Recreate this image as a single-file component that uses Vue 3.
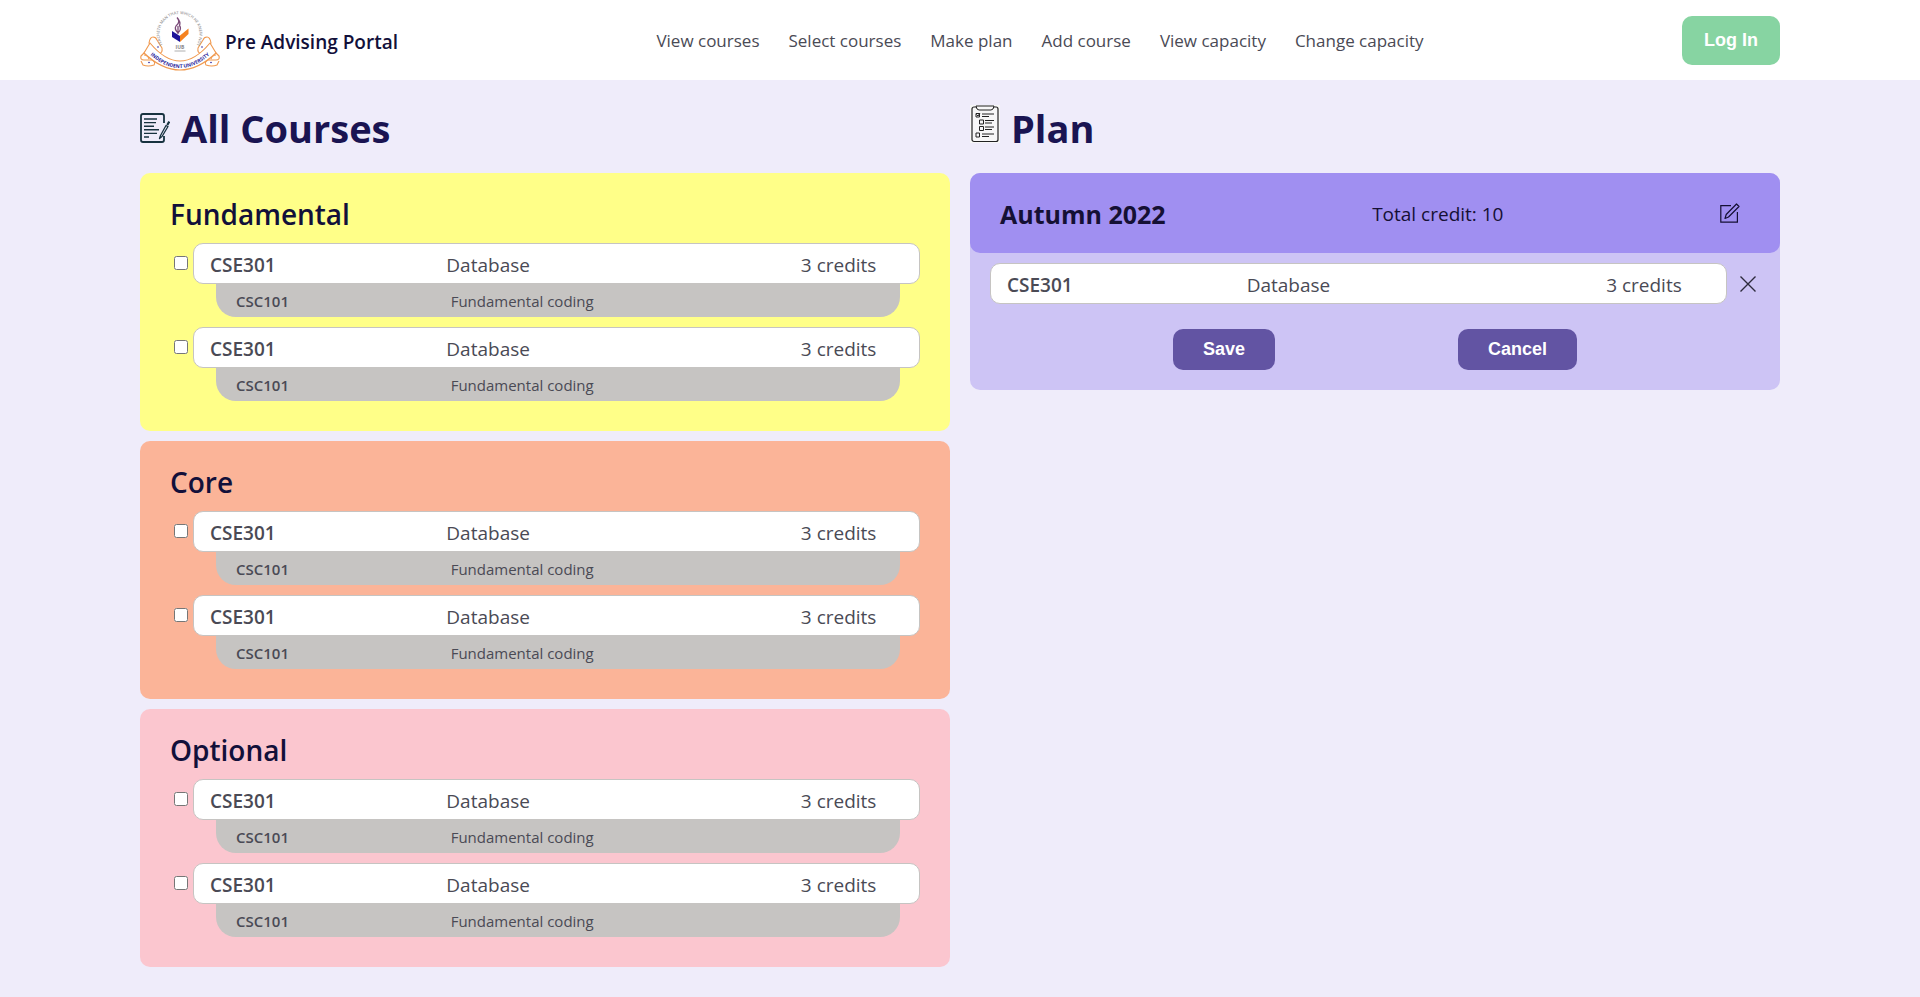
<script setup>
import { ref } from 'vue'

const nav = ['View courses', 'Select courses', 'Make plan', 'Add course', 'View capacity', 'Change capacity']

const makeCourses = () => [1, 2].map((id) => ({
  id,
  code: 'CSE301',
  name: 'Database',
  credits: 3,
  selected: false,
  pre: { code: 'CSC101', name: 'Fundamental coding' },
}))

const groups = ref([
  { key: 'fundamental', title: 'Fundamental', courses: makeCourses() },
  { key: 'core', title: 'Core', courses: makeCourses() },
  { key: 'optional', title: 'Optional', courses: makeCourses() },
])

const plan = ref([{ id: 1, code: 'CSE301', name: 'Database', credits: 3 }])
</script>

<template>
  <div class="page">
    <header class="topbar">
      <a href="#" class="brand">
        <svg class="logo" viewBox="0 0 80 62" aria-hidden="true">
          <defs>
            <path id="motto" d="M27 40.600 A20 20 0 1 1 52 40.600" />
            <path id="ribbon" d="M6 42 Q40 76 74 42" />
          </defs>
          <g fill="#fff" stroke="#f0994f" stroke-width="1.100" stroke-linejoin="round">
            <path d="M9 34 Q10 28 13 28 Q16 28 17 31 L22 39 Q23 45 18 44 L13 38 Z" />
            <path d="M71 34 Q70 28 67 28 Q64 28 63 31 L58 39 Q57 45 62 44 L67 38 Z" />
            <path d="M6 42 L1 47 Q0 51 4 51 L12 51 Q16 53 14 56 Q8 58 3 56 L1 52 M4 46 Q8 46 9 50" />
            <path d="M74 42 L79 47 Q80 51 76 51 L68 51 Q64 53 66 56 Q72 58 77 56 L79 52 M76 46 Q72 46 71 50" />
            <path d="M10 34 Q40 70 70 34 L76 44 Q40 78 4 44 Z" />
          </g>
          <g fill="#2b1f9c">
            <circle cx="9" cy="53.500" r="0.800" /><circle cx="71" cy="53.500" r="0.800" />
            <circle cx="18" cy="38" r="0.800" /><circle cx="62" cy="38" r="0.800" />
          </g>
          <text class="motto"><textPath href="#motto" startOffset="50%">TEACHETH MAN THAT WHICH HE KNEW NOT</textPath></text>
          <text class="ribbon-text"><textPath href="#ribbon" startOffset="50%">INDEPENDENT UNIVERSITY</textPath></text>
          <path fill="#1e1499" d="M32 22 L40 27 V33 L32 28 Z" />
          <path fill="#f58220" d="M40 26.500 L48.500 19.500 V25 L40 33 Z" />
          <path fill="none" stroke="#7a4a78" stroke-width="1.300" d="M37 8.500 Q41 13 36 17 Q34 20 38 24 Q42 20 39.500 16.500 Q41 13 37 8.500 M38 25 V17" />
          <text class="iub" x="40" y="40">IUB</text>
          <path stroke="#999" stroke-width="0.800" d="M34.500 42 H45.500" />
        </svg>
        <span>Pre Advising Portal</span>
      </a>
      <nav class="nav">
        <a v-for="item in nav" :key="item" href="#">{{ item }}</a>
      </nav>
      <button type="button" class="login">Log In</button>
    </header>

    <main class="content">
      <section>
        <h1>
          <svg class="title-icon" viewBox="0 0 30 38" fill="none" stroke="#17323f" aria-hidden="true">
            <path stroke-width="1.800" d="M24 18 V11 Q24 9 22 9 H3 Q1 9 1 11 V35 Q1 37 3 37 H22 Q24 37 24 35 V31" />
            <path stroke-width="1.400" d="M4 14 H17 M4 17.600 H16 M4 21.200 H14 M4 24.800 H19 M4 28.400 H17 M4 32 H9" />
            <path stroke-width="1.300" stroke-linejoin="round" d="M20.500 30.500 L26 20.500 L28 21.500 L22 31.500 L19.500 33.500 Z" />
            <path stroke-width="2.200" d="M27.300 20 L29.300 16.500" />
          </svg>
          All Courses
        </h1>
        <div class="groups">
          <section v-for="group in groups" :key="group.key" class="group" :class="group.key">
            <h2>{{ group.title }}</h2>
            <div v-for="course in group.courses" :key="course.id" class="entry">
              <input :id="group.key + course.id" v-model="course.selected" type="checkbox">
              <div class="entry-body">
                <label class="course" :for="group.key + course.id">
                  <strong>{{ course.code }}</strong>
                  <span>{{ course.name }}</span>
                  <span>{{ course.credits }} credits</span>
                </label>
                <div class="pre">
                  <strong>{{ course.pre.code }}</strong>
                  <span>{{ course.pre.name }}</span>
                </div>
              </div>
            </div>
          </section>
        </div>
      </section>

      <section>
        <h1>
          <svg class="title-icon" viewBox="0 0 30 38" fill="none" stroke="#222" aria-hidden="true">
            <path fill="#f7f7f7" stroke="none" d="M0 0 H30 V38 H0 Z" />
            <rect x="2" y="2" width="26" height="34.500" rx="2" stroke-width="1.200" />
            <path fill="#f7f7f7" stroke-width="1" d="M6 1 H24 Q23.500 5 21 5 H9 Q6.500 5 6 1 Z" />
            <path d="M6 8.500 h3.500 v3.500 h-3.500 Z M9.500 15 h4 v4 h-4 Z M9.500 21.500 h4 v4 h-4 Z M6 28 h3.500 v4 h-3.500 Z M6.500 9.500 l1.500 1.500 l2 -3" stroke-width="1" />
            <path stroke-width="1" d="M12 9 H24 M12 11.500 H19 M15 15.500 H24 M15 18 H22 M15 22 H24 M15 24.500 H22 M12 29 H24 M12 31.500 H19" />
          </svg>
          Plan
        </h1>
        <div class="plan">
          <div class="plan-head">
            <h3>Autumn 2022</h3>
            <span>Total credit: 10</span>
            <button type="button" class="icon-button" aria-label="Edit plan">
              <svg width="20" height="20" viewBox="0 0 20 20" fill="none" stroke="#151034" stroke-width="1.200" aria-hidden="true">
                <path d="M11 2.600 H0.800 V19.200 H17.400 V9" />
                <path d="M16.500 1 L19 3.500 L8.500 14 L5 15.500 L6.200 11.500 Z" stroke-linejoin="round" />
              </svg>
            </button>
          </div>
          <div class="plan-body">
            <div v-for="course in plan" :key="course.id" class="plan-row">
              <div class="course">
                <strong>{{ course.code }}</strong>
                <span>{{ course.name }}</span>
                <span>{{ course.credits }} credits</span>
              </div>
              <button type="button" class="icon-button" aria-label="Remove course">
                <svg width="16" height="16" viewBox="0 0 16 16" fill="none" stroke="#2d2a3c" stroke-width="1.400" aria-hidden="true">
                  <path d="M0.500 0.500 L15.500 15.500 M15.500 0.500 L0.500 15.500" />
                </svg>
              </button>
            </div>
            <div class="actions">
              <button type="button">Save</button>
              <button type="button">Cancel</button>
            </div>
          </div>
        </div>
      </section>
    </main>
  </div>
</template>

<style>
body {
  background: #efecfa;
}
</style>

<style scoped>
.page {
  font-family: "Open Sans", "Noto Sans", sans-serif;
  color: #4a4a55;
}

.page * {
  box-sizing: border-box;
}

h1,
h2,
h3 {
  margin: 0;
}

a {
  color: inherit;
  text-decoration: none;
}

button {
  border: 0;
  font: bold 18px/21px "Liberation Sans", Arial, sans-serif;
  color: #fff;
  cursor: pointer;
}

.topbar {
  display: flex;
  justify-content: space-between;
  align-items: center;
  height: 80px;
  padding: 0 140px;
  background: #fff;
}

.brand {
  display: flex;
  align-items: center;
  gap: 5px;
  font-size: 19px;
  font-weight: 600;
  color: #12103a;
}

.brand span {
  padding-top: 4px;
}

.logo {
  width: 80px;
  height: 62px;
}

.motto {
  font-size: 4px;
  fill: #999;
  text-anchor: middle;
}

.ribbon-text {
  font-size: 5px;
  font-weight: 700;
  fill: #2b1f9c;
  text-anchor: middle;
}

.iub {
  font-size: 5px;
  font-weight: 700;
  fill: #888;
  text-anchor: middle;
}

.nav {
  display: flex;
  gap: 29px;
  font-size: 17px;
}

.login {
  padding: 14px 22px;
  border-radius: 10px;
  background: #87d4a2;
}

.content {
  display: grid;
  grid-template-columns: 1fr 1fr;
  gap: 20px;
  padding: 20px 140px 30px;
}

h1 {
  display: flex;
  align-items: center;
  gap: 11px;
  height: 56px;
  margin-bottom: 17px;
  font-size: 38px;
  font-weight: 700;
  color: #1a1452;
}

.title-icon {
  width: 30px;
  height: 38px;
  margin-bottom: 8px;
}

.groups {
  display: grid;
  gap: 10px;
}

.group {
  padding: 20px 30px 30px;
  border-radius: 10px;
}

.fundamental {
  background: #ffff88;
}

.core {
  background: #fbb498;
}

.optional {
  background: #fbc6cf;
}

h2 {
  margin-bottom: 8px;
  font-size: 28px;
  line-height: 42px;
  font-weight: 600;
  color: #12103a;
}

.entry {
  display: flex;
  align-items: flex-start;
  gap: 5px;
}

.entry + .entry {
  margin-top: 10px;
}

.entry input {
  width: 14px;
  height: 14px;
  margin: 13px 0 0 4px;
}

.entry-body {
  flex: 1;
}

.course {
  display: grid;
  grid-template-columns: 2fr 3fr 1fr;
  align-items: center;
  height: 41px;
  padding: 2px 0 0 16px;
  border: 1px solid #c6c4c2;
  border-radius: 10px;
  background: #fff;
  font-size: 19px;
}

.pre {
  display: grid;
  grid-template-columns: 1fr 2fr;
  align-items: center;
  height: 33px;
  margin: 0 20px 0 23px;
  padding: 0 20px;
  border-radius: 0 0 20px 20px;
  background: #c6c4c2;
  font-size: 15px;
}

strong {
  font-weight: 600;
}

.plan {
  border-radius: 10px;
  background: #cdc4f5;
}

.plan-head {
  display: flex;
  justify-content: space-between;
  align-items: center;
  height: 80px;
  padding: 0 30px;
  border-radius: 10px;
  background: #a08ff1;
  color: #151034;
  font-size: 19px;
}

.plan-head h3,
.plan-head span {
  padding-top: 2px;
}

h3 {
  font-size: 25px;
  font-weight: 700;
}

.icon-button {
  display: flex;
  justify-content: center;
  align-items: center;
  width: 40px;
  height: 40px;
  padding: 0;
  background: none;
}

.plan-body {
  padding: 10px 20px 20px;
}

.plan-row {
  display: flex;
  align-items: center;
  gap: 1px;
  margin-right: -8px;
}

.plan-row .course {
  flex: 1;
}

.actions {
  display: flex;
  justify-content: space-evenly;
  margin-top: 25px;
}

.actions button {
  padding: 10px 30px;
  border-radius: 10px;
  background: #6254a3;
}
</style>
